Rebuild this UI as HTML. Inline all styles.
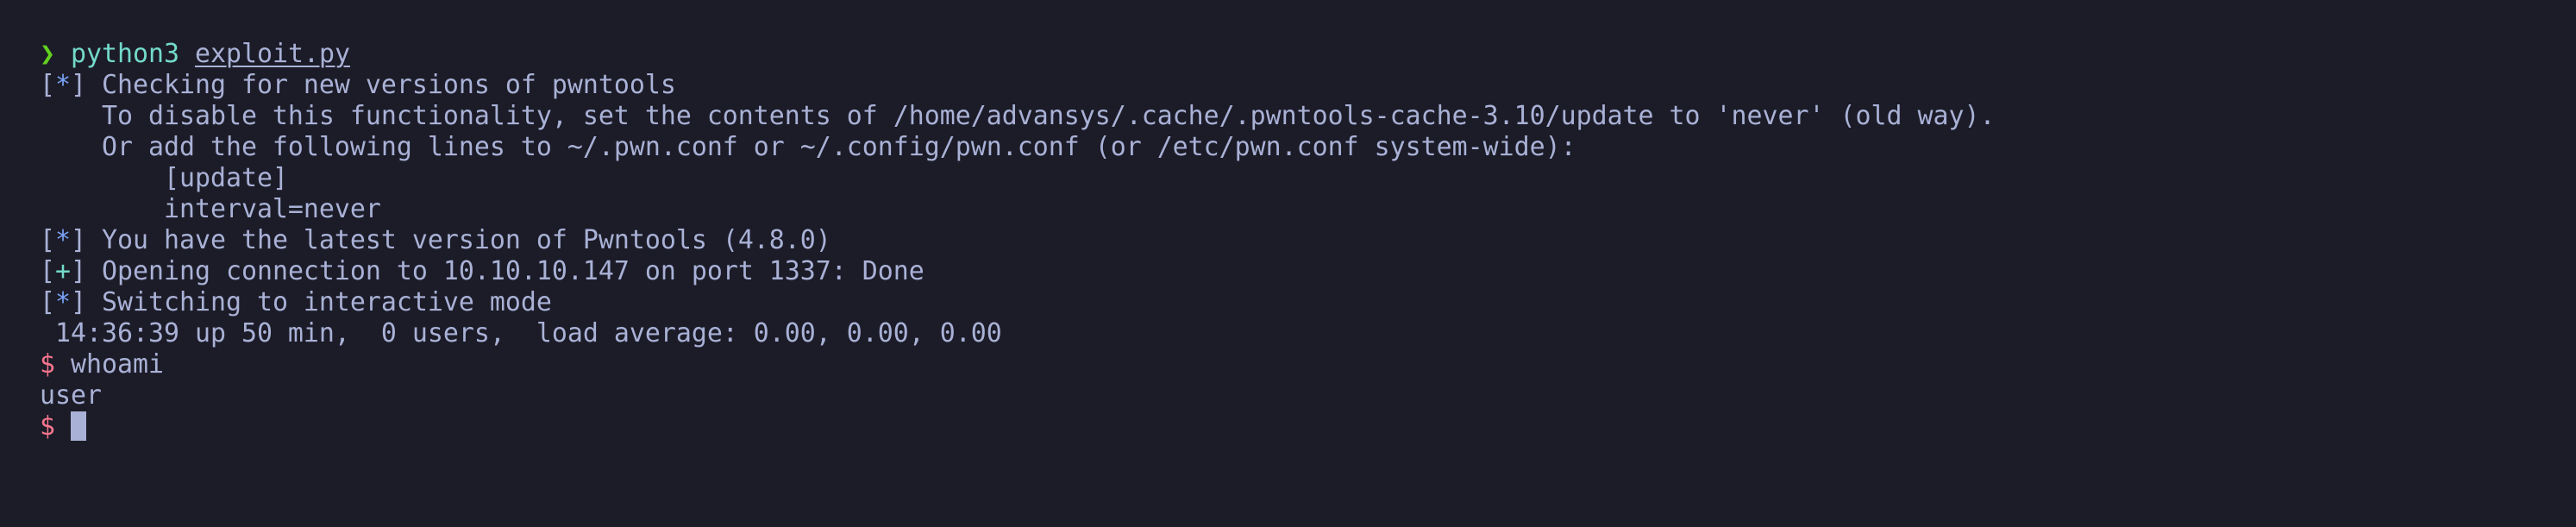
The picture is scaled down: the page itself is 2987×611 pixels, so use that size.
<!DOCTYPE html>
<html><head><meta charset="utf-8"><style>
html,body{margin:0;padding:0;}
body{width:2987px;height:611px;background:#1c1c28;overflow:hidden;}
pre{margin:0;position:absolute;left:46px;top:45px;font-family:"DejaVu Sans Mono","Liberation Mono",monospace;font-size:29.9px;line-height:36px;color:#a9b1d6;white-space:pre;}
.g{color:#62d01f}.t{color:#73daca}.b{color:#7aa2f7}.r{color:#f7768e}.u{text-decoration:underline;text-underline-offset:4px;text-decoration-thickness:2px}
.cur{display:inline-block;width:18px;height:34px;background:#a9b1d6;vertical-align:-7px;}
</style></head><body>
<pre><span class="g">❯</span> <span class="t">python3</span> <span class="u">exploit.py</span>
[<span class="b">*</span>] Checking for new versions of pwntools
    To disable this functionality, set the contents of /home/advansys/.cache/.pwntools-cache-3.10/update to 'never' (old way).
    Or add the following lines to ~/.pwn.conf or ~/.config/pwn.conf (or /etc/pwn.conf system-wide):
        [update]
        interval=never
[<span class="b">*</span>] You have the latest version of Pwntools (4.8.0)
[<span class="t">+</span>] Opening connection to 10.10.10.147 on port 1337: Done
[<span class="b">*</span>] Switching to interactive mode
 14:36:39 up 50 min,  0 users,  load average: 0.00, 0.00, 0.00
<span class="r">$</span> whoami
user
<span class="r">$</span> <span class="cur"></span></pre>
</body></html>
